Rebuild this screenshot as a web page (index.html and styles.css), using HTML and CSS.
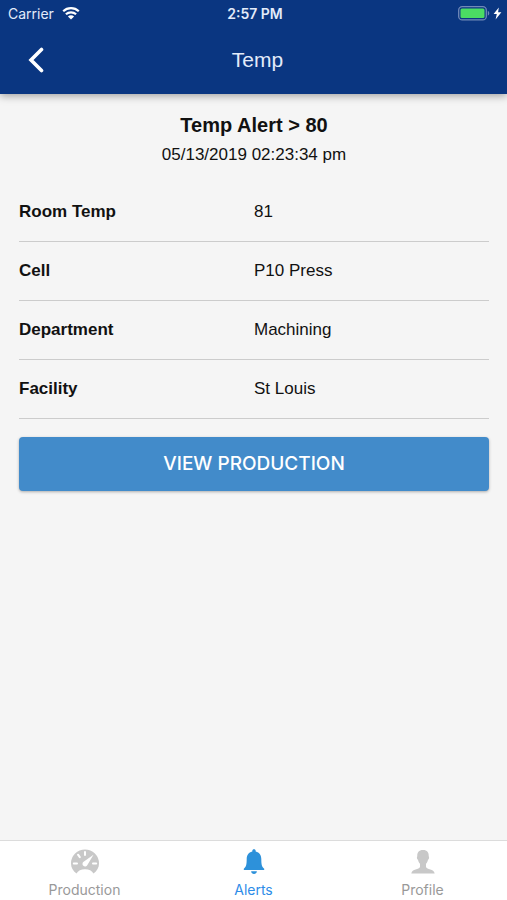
FILE: index.html
```html
<!DOCTYPE html>
<html lang="en">
<head>
<meta charset="utf-8">
<meta name="viewport" content="width=device-width, initial-scale=1">
<title>Temp</title>
<link rel="stylesheet" href="styles.css">
</head>
<body>
<header class="top">
  <div class="status">
    <div class="carrier">
      <span>Carrier</span>
      <svg class="wifi" viewBox="0 0 18 13" aria-hidden="true">
        <path d="M1.200 4.300C5.600.1 12.400.1 16.800 4.300M3.900 7.300C6.800 4.600 11.200 4.600 14.100 7.300" fill="none" stroke="currentColor" stroke-width="2.200"/>
        <path d="M5.900 9.500C7.700 7.800 10.300 7.800 12.100 9.500L9 12.500z" fill="currentColor"/>
      </svg>
    </div>
    <span class="clock">2:57 PM</span>
    <div class="power">
      <svg class="battery" viewBox="0 0 32 15" aria-hidden="true">
        <rect x="0.700" y="0.700" width="27.600" height="13.200" rx="3.500" fill="none" stroke="#7189b8" stroke-width="1.300"/>
        <rect x="2.500" y="2.500" width="24" height="9.600" rx="1.500" fill="#4bdc63"/>
        <path d="M29.800 4.800c2 1 2 4 0 5z" fill="#7189b8"/>
      </svg>
      <svg class="bolt" viewBox="0 0 9 13" aria-hidden="true"><path d="M5.800.5.600 7h3.200L2.600 12.500 8.400 5.300H5.100z" fill="currentColor"/></svg>
    </div>
  </div>
  <nav class="bar">
    <button class="back" type="button" aria-label="Back">
      <svg viewBox="0 0 18 28" aria-hidden="true"><path d="M15.500 3.500 5 14l10.500 10.500" fill="none" stroke="currentColor" stroke-width="3.600" stroke-linecap="round" stroke-linejoin="miter"/></svg>
    </button>
    <h1 class="title">Temp</h1>
  </nav>
</header>
<main class="content">
  <h2 class="alert">Temp Alert &gt; 80</h2>
  <p class="date">05/13/2019 02:23:34 pm</p>
  <dl class="details">
    <div class="row"><dt>Room Temp</dt><dd>81</dd></div>
    <div class="row"><dt>Cell</dt><dd>P10 Press</dd></div>
    <div class="row"><dt>Department</dt><dd>Machining</dd></div>
    <div class="row"><dt>Facility</dt><dd>St Louis</dd></div>
  </dl>
  <button class="action" type="button">VIEW PRODUCTION</button>
</main>
<nav class="tabs">
  <a class="tab" href="#production">
    <svg viewBox="0 0 30 28" aria-hidden="true">
      <path d="M6.500 25.500C3 23 1 19.500 1 15.500a14 14 0 0 1 28 0c0 4-2 7.500-5.500 10-1.500-2.800-4.500-4.300-8.500-4.300s-7 1.500-8.500 4.300z" fill="#c8c8c8"/>
      <path d="M15 3.900v3.200M8 6.700l1.800 2.500M3.800 15.500H7M23 15.500h3.200" stroke="#fff" stroke-width="2" stroke-linecap="round"/>
      <path d="M23.500 6.800 17.400 17a2.600 2.600 0 1 1-3.800-3.300z" fill="#fff"/>
    </svg>
    <span>Production</span>
  </a>
  <a class="tab active" href="#alerts" aria-current="page">
    <svg viewBox="0 0 30 28" aria-hidden="true"><path d="M15 1.300c-1 0-1.700.7-1.700 1.600v.5C9.500 4.200 7.700 7.300 7.700 11c0 6-.7 8.100-2.900 9.700v1.300h20.400v-1.300c-2.200-1.600-2.900-3.700-2.900-9.700 0-3.700-1.800-6.800-5.600-7.600v-.5c0-.9-.7-1.600-1.700-1.600zM12.100 23.300c.2 1.700 1.400 2.600 2.900 2.600s2.700-.9 2.900-2.600z" fill="#2d91da"/></svg>
    <span>Alerts</span>
  </a>
  <a class="tab" href="#profile">
    <svg viewBox="0 0 30 28" aria-hidden="true"><path d="M15 2c-4.200 0-6 2.700-5.700 6.200-.8.900-.3 3 .7 3.600.4 2 1 3 2 3.900v3.400c-.7 2.500-8 1.700-8.700 6.400h23.400c-.7-4.700-8-3.900-8.700-6.400v-3.400c1-.9 1.600-1.900 2-3.900 1-.6 1.500-2.700.7-3.600C21 4.700 19.200 2 15 2z" fill="#c8c8c8"/></svg>
    <span>Profile</span>
  </a>
</nav>
</body>
</html>
```
FILE: styles.css
```css
* {
  box-sizing: border-box;
}

body {
  display: flex;
  flex-direction: column;
  min-height: 100vh;
  margin: 0;
  background: #f5f5f5;
  color: #111;
  font-family: "Liberation Sans", Arial, sans-serif;
  font-size: 17px;
  line-height: 24px;
}

.top {
  background: #0a3681;
  color: #fff;
  box-shadow: 0 2px 8px rgba(0, 0, 0, 0.35);
}

.status {
  display: grid;
  grid-template-columns: 1fr auto 1fr;
  align-items: center;
  height: 27px;
  padding: 0 5px 0 8px;
  color: #e3ebfa;
  font: 14px/27px Inter, sans-serif;
}

.carrier,
.power {
  display: flex;
  align-items: center;
}

.carrier {
  gap: 8px;
}

.wifi {
  width: 18px;
  height: 13px;
  color: #fff;
}

.clock {
  font-weight: 600;
}

.power {
  justify-content: flex-end;
  gap: 3px;
}

.battery {
  width: 32px;
  height: 15px;
}

.bolt {
  width: 9px;
  height: 13px;
  color: #fff;
}

.bar {
  display: grid;
  grid-template-columns: 70px 1fr 62px;
  align-items: center;
  padding-bottom: 1px;
  height: 67px;
}

.back {
  display: flex;
  justify-content: center;
  padding: 8px;
  border: 0;
  background: none;
  color: #fff;
}

.back svg {
  width: 18px;
  height: 28px;
}

.title {
  margin: 0;
  color: #e3ebfa;
  font-size: 21px;
  font-weight: 400;
  text-align: center;
}

.content {
  flex: 1;
  padding: 19px 18px 20px 19px;
}

.alert,
.date {
  margin: 0;
  text-align: center;
}

.alert {
  margin-bottom: 6px;
  font-size: 20px;
}

.details {
  margin: 16px 0 18px;
}

.row {
  display: grid;
  grid-template-columns: 1fr 1fr;
  padding: 17px 0;
  border-bottom: 1px solid #ccc;
}

.row dt {
  font-weight: 700;
}

.row dd {
  margin: 0;
}

.action {
  width: 100%;
  padding: 15px;
  border: 0;
  border-radius: 4px;
  background: #428bca;
  box-shadow: 0 1px 3px rgba(0, 0, 0, 0.3);
  color: #fff;
  font: 500 19px/24px Inter, sans-serif;
}

.tabs {
  display: grid;
  grid-template-columns: repeat(3, 1fr);
  border-top: 1px solid #dcdcdc;
  background: #fff;
}

.tab {
  display: flex;
  flex-direction: column;
  align-items: center;
  gap: 4px;
  padding-top: 7px;
  color: #999;
  font: 14px/20px Inter, sans-serif;
  text-decoration: none;
}

.tab svg {
  width: 30px;
  height: 28px;
}

.active {
  color: #2d8ce8;
}
```
